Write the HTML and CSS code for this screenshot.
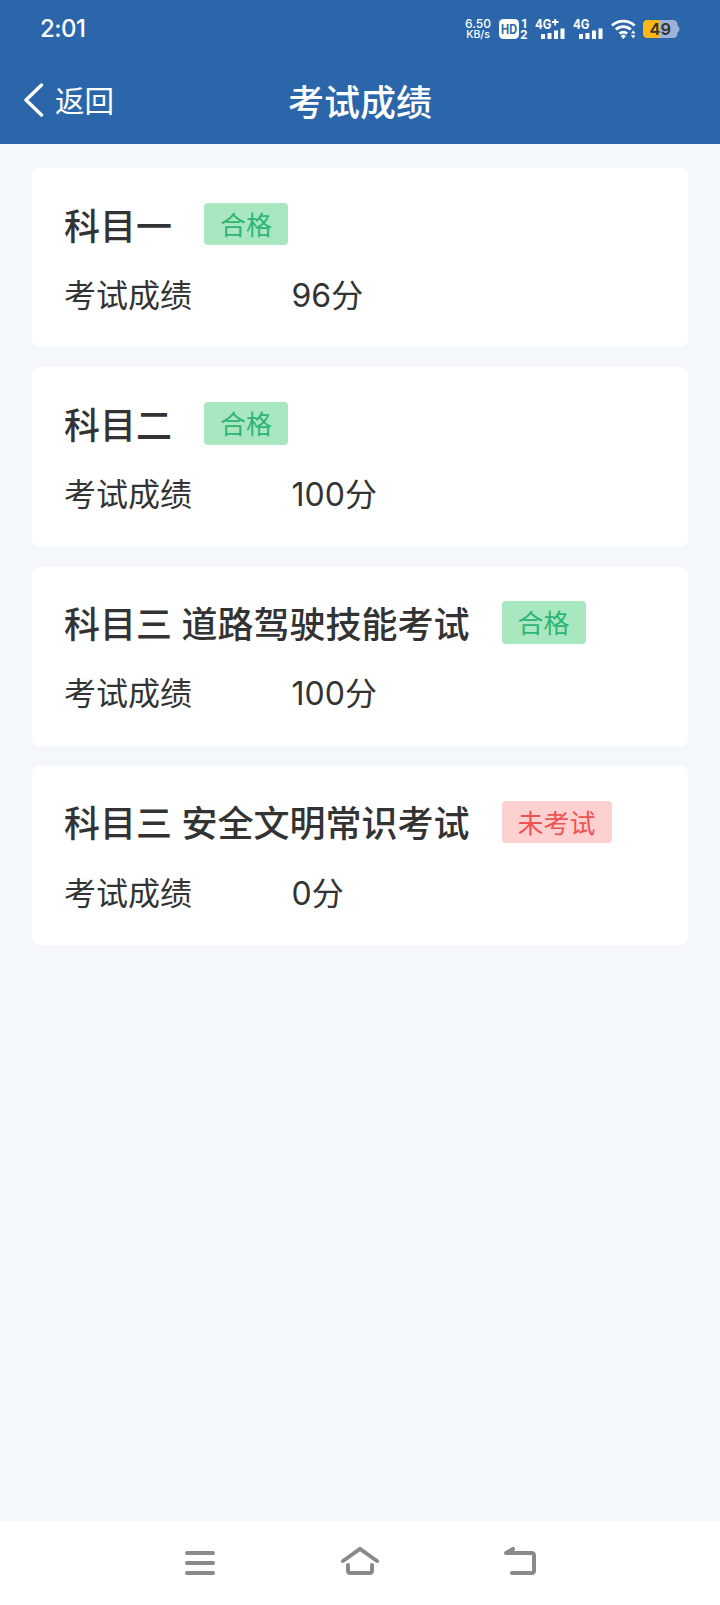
FILE: index.html
```html
<!DOCTYPE html>
<html lang="zh-CN">
<head>
<meta charset="utf-8">
<meta name="viewport" content="width=device-width, initial-scale=1">
<title>考试成绩</title>
<link rel="stylesheet" href="styles.css">
</head>
<body>

<header class="header">
  <div class="status">
    <span class="time">2:01</span>
    <div class="status-icons">
      <div class="speed">
        <span class="speed-num">6.50</span>
        <span class="speed-unit">KB/s</span>
      </div>
      <svg class="hd" width="30" height="22" viewBox="0 0 30 22">
        <rect x="0" y="1" width="20" height="20" rx="4.500" fill="#fff"/>
        <text x="10" y="15.500" text-anchor="middle" font-size="12.500" font-weight="700" fill="#2b66aa" textLength="16" lengthAdjust="spacingAndGlyphs">HD</text>
        <text x="22.600" y="9.500" font-size="12" font-weight="700" fill="#fff">1</text>
        <text x="21" y="21" font-size="12" font-weight="700" fill="#fff">2</text>
      </svg>
      <svg class="sim" width="32" height="22" viewBox="0 0 32 22">
        <text x="0" y="10.500" font-size="13" font-weight="700" fill="#fff" textLength="16.500" lengthAdjust="spacingAndGlyphs">4G</text>
        <path d="M17 4h6.500M20.200 1v6.500" stroke="#fff" stroke-width="1.900"/>
        <path d="M6 16h4v5h-4zM12.500 15h4v6h-4zM19 12.500h4v8.500h-4zM25.500 10.500h4v10.500h-4z" fill="#fff"/>
      </svg>
      <svg class="sim" width="32" height="22" viewBox="0 0 32 22">
        <text x="0" y="10.500" font-size="13" font-weight="700" fill="#fff" textLength="16.500" lengthAdjust="spacingAndGlyphs">4G</text>
        <path d="M6 16h4v5h-4zM12.500 15h4v6h-4zM19 12.500h4v8.500h-4zM25.500 10.500h4v10.500h-4z" fill="#fff"/>
      </svg>
      <svg class="wifi" width="26" height="22" viewBox="0 0 26 22">
        <path d="M1 7.600a16.500 16.500 0 0 1 22.600 0M4.800 11.600a11 11 0 0 1 15 0M8.600 15.600a5.600 5.600 0 0 1 7.400 0" fill="none" stroke="#fff" stroke-width="2.800"/>
        <path d="M9.600 18l2.700-1.600 2.700 1.600-2.700 3z" fill="#fff"/>
        <path d="M20 15.400l2.200-3.200 2.200 3.200zM20 17.200l2.200 3.400 2.200-3.400z" fill="#fff"/>
      </svg>
      <svg class="battery" width="37" height="22" viewBox="0 0 37 22">
        <path d="M4.500 2H30a4.500 4.500 0 0 1 4.500 4.500V7.500q2 1 2 3.500t-2 3.500V15.500a4.500 4.500 0 0 1-4.500 4.500H4.500A4.500 4.500 0 0 1 0 15.500V6.500A4.500 4.500 0 0 1 4.500 2z" fill="#9bb3d6"/>
        <path d="M17 2H4.500A4.500 4.500 0 0 0 0 6.500v9A4.500 4.500 0 0 0 4.500 20H17z" fill="#fdb813"/>
        <text x="17.300" y="17" text-anchor="middle" font-size="16.500" font-weight="600" fill="#333">49</text>
      </svg>
    </div>
  </div>

  <div class="titlebar">
    <a class="back">
      <svg width="20" height="34" viewBox="0 0 20 34">
        <path d="M17.500 2L2 17l15.500 15" fill="none" stroke="#fff" stroke-width="3.400" stroke-linecap="round" stroke-linejoin="round"/>
      </svg>
      <span>返回</span>
    </a>
    <h1>考试成绩</h1>
  </div>
</header>

<main class="list">
  <section class="card">
    <div class="card-head">
      <h2>科目一</h2>
      <span class="tag pass">合格</span>
    </div>
    <div class="row">
      <span class="label">考试成绩</span>
      <span class="score">96分</span>
    </div>
  </section>

  <section class="card">
    <div class="card-head">
      <h2>科目二</h2>
      <span class="tag pass">合格</span>
    </div>
    <div class="row">
      <span class="label">考试成绩</span>
      <span class="score">100分</span>
    </div>
  </section>

  <section class="card">
    <div class="card-head">
      <h2>科目三 道路驾驶技能考试</h2>
      <span class="tag pass">合格</span>
    </div>
    <div class="row">
      <span class="label">考试成绩</span>
      <span class="score">100分</span>
    </div>
  </section>

  <section class="card">
    <div class="card-head">
      <h2>科目三 安全文明常识考试</h2>
      <span class="tag none">未考试</span>
    </div>
    <div class="row">
      <span class="label">考试成绩</span>
      <span class="score">0分</span>
    </div>
  </section>
</main>

<nav class="navbar">
  <a>
    <svg width="40" height="32" viewBox="0 0 40 32">
      <path d="M7 6h26M7 16h26M7 26h26"/>
    </svg>
  </a>
  <a>
    <svg width="40" height="32" viewBox="0 0 40 32">
      <path d="M3 14L20 1.800 37 14M8 18v5.500q0 2.500 2.500 2.500h19q2.500 0 2.500-2.500V18"/>
    </svg>
  </a>
  <a>
    <svg width="40" height="32" viewBox="0 0 40 32">
      <path d="M13 2L6 6h25.500q2.500 0 2.500 2.500v15q0 2.500-2.500 2.500H12"/>
    </svg>
  </a>
</nav>

</body>
</html>
```
FILE: styles.css
```css
* {
  box-sizing: border-box;
}

body {
  margin: 0;
  height: 1605px;
  display: flex;
  flex-direction: column;
  background: #f4f8fa;
  color: #333;
  font-family: "Noto Sans CJK SC", sans-serif;
}

h1, h2 {
  margin: 0;
  font-weight: 500;
}

.header {
  height: 144px;
  background: #2b66aa;
  color: #fff;
}

/* status bar */
.status {
  height: 57px;
  padding: 0 40px;
  display: flex;
  justify-content: space-between;
  align-items: center;
  font-family: Inter, sans-serif;
}

.time {
  font-size: 24px;
  font-weight: 500;
  letter-spacing: -0.5px;
}

.status-icons {
  display: flex;
  align-items: center;
}

.status-icons svg {
  display: block;
  overflow: visible;
}

.speed {
  display: flex;
  flex-direction: column;
  align-items: center;
  width: 26px;
  margin-right: 8px;
  font-weight: 500;
}

.speed-num {
  font-size: 12px;
  line-height: 11px;
}

.speed-unit {
  font-size: 10.5px;
  line-height: 11px;
}

.hd,
.sim,
.wifi {
  margin-right: 6px;
}

/* title bar */
.titlebar {
  height: 87px;
  padding: 0 24px;
  display: grid;
  grid-template-columns: 1fr auto 1fr;
  align-items: center;
}

.titlebar h1 {
  padding-bottom: 2px;
  font-size: 36px;
  line-height: 52px;
}

.back {
  display: flex;
  align-items: center;
  gap: 11px;
  padding-bottom: 1px;
  font-size: 29.5px;
  line-height: 42px;
}

.back span {
  padding-bottom: 2px;
}

/* cards */
.list {
  flex: 1;
  padding: 24px 32px;
  display: flex;
  flex-direction: column;
  gap: 20px;
}

.card {
  height: 179.3px;
  padding: 34.5px 32px 0;
  background: #fff;
  border-radius: 8px;
}

.card-head {
  display: flex;
  align-items: center;
  gap: 32px;
  height: 43px;
}

.card-head h2 {
  font-size: 36px;
  line-height: 43px;
  word-spacing: 1.5px;
}

.tag {
  padding: 0 16px;
  border-radius: 4px;
  font-size: 26px;
  line-height: 42.5px;
}

.pass {
  background: #a9e7c0;
  color: #2db574;
}

.none {
  background: #ffd0d0;
  color: #ee5252;
}

.row {
  display: flex;
  align-items: baseline;
  margin-top: 24.3px;
  font-size: 32px;
  line-height: 46px;
}

.label {
  width: 227.5px;
}

.score {
  font-family: Inter, "Noto Sans CJK SC", sans-serif;
}

/* system navigation */
.navbar {
  height: 84px;
  display: flex;
  justify-content: center;
  align-items: center;
  background: #fff;
}

.navbar a {
  width: 160px;
  display: flex;
  justify-content: center;
}

.navbar svg {
  fill: none;
  stroke: #8a8a8a;
  stroke-width: 4;
  stroke-linecap: round;
  stroke-linejoin: round;
}
```
